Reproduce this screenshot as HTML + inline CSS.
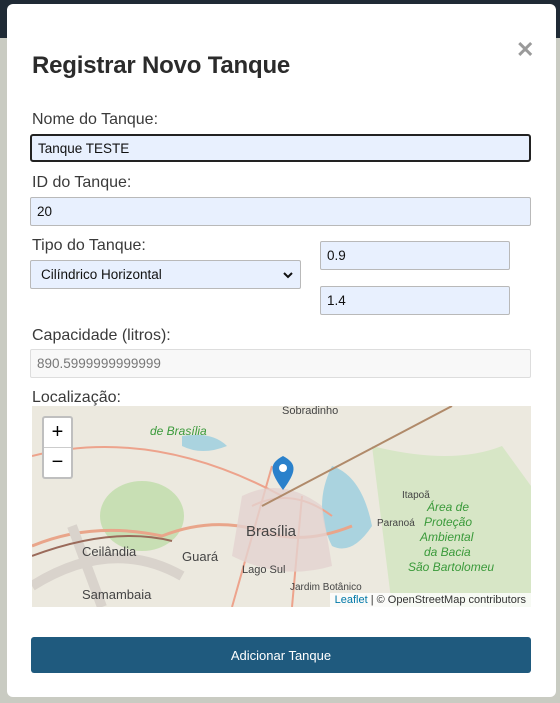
<!DOCTYPE html>
<html><head><meta charset="utf-8"><style>
*{box-sizing:border-box;margin:0;padding:0}
body{width:560px;height:703px;overflow:hidden;background:#8a8f88;font-family:"Liberation Sans",sans-serif;position:relative}
.top{position:absolute;left:0;top:0;width:560px;height:38px;background:#1f2a35}
.side{position:absolute;left:0;top:38px;width:560px;height:665px;background:#c9cbc2}
.modal{position:absolute;left:7px;top:4px;width:549px;height:693px;background:#fff;border-radius:6px}
h2{position:absolute;left:25px;top:48px;font-size:24px;font-weight:bold;color:#2b2b2b;letter-spacing:-0.2px}
.x{position:absolute;left:509px;top:33px;font-size:22px;font-weight:bold;color:#9a9a9a}
.lbl{position:absolute;left:25px;font-size:16px;color:#3a3a3a}
.in{position:absolute;background:#e8f0fe;border:1px solid #b9b9b9;border-radius:2px;font-size:13.5px;color:#111;padding-left:6px;display:flex;align-items:center}
</style></head><body>
<div class="top"></div><div class="side"></div>
<div class="modal">
<div class="x">✕</div>
<h2>Registrar Novo Tanque</h2>
<div class="lbl" style="top:107px">Nome do Tanque:</div>
<div class="in" style="left:23px;top:130px;width:501px;height:28px;border:2px solid #222;border-radius:3px">Tanque TESTE</div>
<div class="lbl" style="top:170px">ID do Tanque:</div>
<div class="in" style="left:23px;top:193px;width:501px;height:29px">20</div>
<div class="lbl" style="top:233px">Tipo do Tanque:</div>
<div class="in" style="left:23px;top:256px;width:271px;height:29px;padding-left:10px">Cilíndrico Horizontal<svg style="position:absolute;right:7px;top:11px" width="10" height="7"><path d="M1 1 L5 5 L9 1" stroke="#111" stroke-width="2" fill="none"/></svg></div>
<div class="in" style="left:313px;top:237px;width:190px;height:29px">0.9</div>
<div class="in" style="left:313px;top:282px;width:190px;height:29px">1.4</div>
<div class="lbl" style="top:323px">Capacidade (litros):</div>
<div class="in" style="left:23px;top:345px;width:501px;height:29px;background:#f8f8f8;border-color:#ddd;color:#777">890.5999999999999</div>
<div class="lbl" style="top:385px">Localização:</div>
<div style="position:absolute;left:25px;top:402px;width:499px;height:201px;background:#efece4;overflow:hidden">
<svg width="499" height="201" style="position:absolute;left:0;top:0">
<rect x="0" y="0" width="499" height="201" fill="#ece9df"/>
<path d="M300 60 Q330 70 340 120 Q320 150 300 140 Q280 100 300 60Z" fill="#aad3df"/>
<path d="M150 30 Q180 25 195 40 Q170 50 150 40Z" fill="#aad3df"/>
<ellipse cx="110" cy="110" rx="42" ry="35" fill="#c8dfb4"/>
<path d="M340 40 Q420 60 470 40 L499 80 L499 201 L360 201 Q350 120 340 40Z" fill="#d7e6c6"/>
<path d="M0 140 Q60 115 130 130 Q180 110 230 125 Q270 140 320 120" stroke="#e9a58a" stroke-width="3" fill="none"/>
<path d="M200 201 L240 60 M260 201 L270 90 M0 50 Q120 20 250 90 M220 100 Q260 80 300 110" stroke="#eda38c" stroke-width="2" fill="none"/>
<path d="M210 90 Q250 70 290 100 L300 160 Q250 175 200 150Z" fill="#e4d2d0" opacity=".8"/>
<path d="M0 180 Q80 130 150 170 M40 120 L70 201" stroke="#d9d3cc" stroke-width="10" fill="none"/>
<path d="M230 100 L420 0" stroke="#b08a6a" stroke-width="2" fill="none"/>
<path d="M0 150 Q80 120 140 135" stroke="#9a6a5a" stroke-width="2" fill="none"/>
<text x="214" y="130" font-size="15" fill="#444" font-family="Liberation Sans">Brasília</text>
<text x="50" y="150" font-size="13" fill="#444" font-family="Liberation Sans">Ceilândia</text>
<text x="150" y="155" font-size="13" fill="#444" font-family="Liberation Sans">Guará</text>
<text x="50" y="193" font-size="13" fill="#444" font-family="Liberation Sans">Samambaia</text>
<text x="210" y="167" font-size="11" fill="#444" font-family="Liberation Sans">Lago Sul</text>
<text x="250" y="8" font-size="11" fill="#444" font-family="Liberation Sans">Sobradinho</text>
<text x="370" y="92" font-size="10" fill="#444" font-family="Liberation Sans">Itapoã</text>
<text x="345" y="120" font-size="10" fill="#444" font-family="Liberation Sans">Paranoá</text>
<text x="395" y="105" font-size="12" fill="#3a9a3a" font-style="italic" font-family="Liberation Sans">Área de</text>
<text x="392" y="120" font-size="12" fill="#3a9a3a" font-style="italic" font-family="Liberation Sans">Proteção</text>
<text x="388" y="135" font-size="12" fill="#3a9a3a" font-style="italic" font-family="Liberation Sans">Ambiental</text>
<text x="392" y="150" font-size="12" fill="#3a9a3a" font-style="italic" font-family="Liberation Sans">da Bacia</text>
<text x="376" y="165" font-size="12" fill="#3a9a3a" font-style="italic" font-family="Liberation Sans">São Bartolomeu</text>
<text x="118" y="29" font-size="12" fill="#3a9a3a" font-style="italic" font-family="Liberation Sans">de Brasília</text>
<text x="258" y="184" font-size="10" fill="#444" font-family="Liberation Sans">Jardim Botânico</text>
<path d="M251 84 C238 66 236 58 251 50 C266 58 264 66 251 84Z" fill="#2a81cb"/>
<circle cx="251" cy="62" r="4" fill="#fff"/>
</svg>
<div style="position:absolute;left:10px;top:10px;width:31px;height:63px;background:#fff;border:2px solid rgba(0,0,0,.25);border-radius:3px;font-size:20px;text-align:center;line-height:29px;color:#000"><div style="border-bottom:1px solid #ccc">+</div><div>−</div></div>
<div style="position:absolute;right:0;bottom:0;background:rgba(255,255,255,.8);font-size:11px;color:#333;padding:1px 5px"><span style="color:#0078a8">Leaflet</span> | © OpenStreetMap contributors</div>
</div>
<div style="position:absolute;left:24px;top:633px;width:500px;height:36px;background:#1f5a7e;border-radius:3px;color:#fff;font-size:13px;display:flex;align-items:center;justify-content:center">Adicionar Tanque</div>
</div>
</body></html>
